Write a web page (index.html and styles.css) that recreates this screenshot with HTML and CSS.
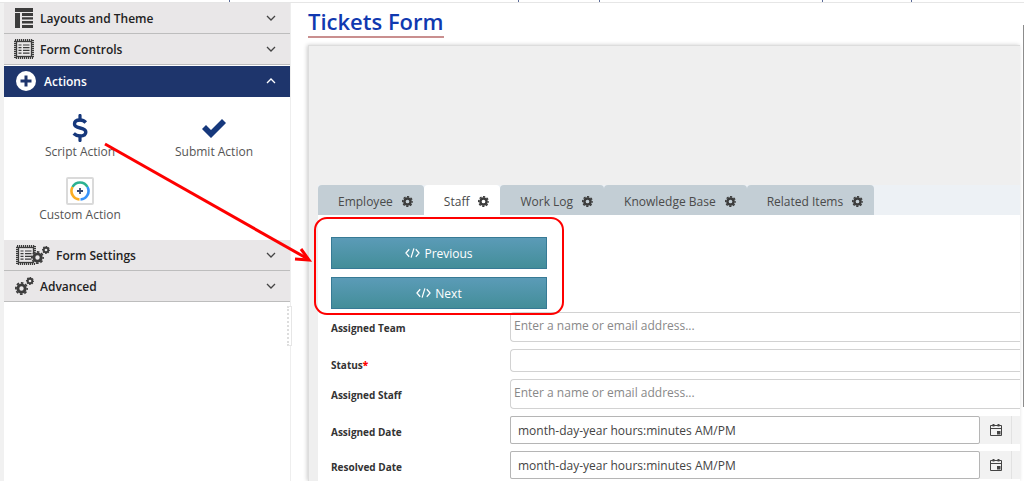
FILE: index.html
```html
<!DOCTYPE html>
<html lang="en">
<head>
    <meta charset="UTF-8">
    <meta name="viewport" content="width=device-width, initial-scale=1.0">
    <title>Tickets Form</title>
    <link rel="stylesheet" href="styles.css">
</head>
<body>

<!-- Shared icons -->
<svg class="icon-defs" aria-hidden="true">
    <symbol id="gear" viewBox="0 0 16 16">
        <circle cx="8" cy="8" r="4.5" fill="none" stroke="currentColor" stroke-width="3.6"/>
        <circle cx="8" cy="8" r="6.9" fill="none" stroke="currentColor" stroke-width="2.2" stroke-dasharray="3.2 2.22" stroke-dashoffset="1.6"/>
    </symbol>
    <symbol id="chevron" viewBox="0 0 10 6">
        <path d="M1 1l4 4 4-4" fill="none" stroke="currentColor" stroke-width="1.3"/>
    </symbol>
    <symbol id="form" viewBox="0 0 20 20">
        <rect x="1" y="1" width="18" height="18" fill="none" stroke="currentColor" stroke-width="2" stroke-dasharray="1.2 0.8"/>
        <rect x="2.5" y="2.5" width="15" height="15" fill="none" stroke="currentColor" stroke-width="1.3"/>
        <path d="M4.5 6h3M9 6h6.5M4.5 8.7h3M9 8.7h6.5M4.5 11.4h3M9 11.4h6.5M4.5 14.1h3M9 14.1h6.5" stroke="currentColor" stroke-width="1.2"/>
    </symbol>
    <symbol id="code" viewBox="0 0 16 12">
        <path d="M4.5 2L1 6l3.5 4M11.5 2L15 6l-3.5 4M9.5 1l-3 10" fill="none" stroke="currentColor" stroke-width="1.3"/>
    </symbol>
    <symbol id="calendar" viewBox="0 0 14 14">
        <path d="M1.5 2.5h11v10h-11zM1.5 5.5h11" fill="none" stroke="currentColor"/>
        <path d="M3.500 1h2v2.500h-2zM8.500 1h2v2.500h-2zM8 8h3.500v3.500H8z" fill="currentColor"/>
    </symbol>
</svg>

<div class="topline">
    <i></i><i></i><i></i><i></i><i></i>
</div>

<div class="designer">
    <nav class="sidebar">
        <button class="section">
            <svg class="section-icon" viewBox="-1 0 20 20" width="20" height="20">
                <path d="M0 0h18v4H0zM0 5h5v15H0zM7 5h11v3H7zM7 9.2h11v2.4H7zM7 13h11v2.4H7zM7 17h11v3H7z" fill="currentColor"/>
            </svg>
            <span>Layouts and Theme</span>
            <svg class="chevron"><use href="#chevron"/></svg>
        </button>
        <button class="section">
            <svg class="section-icon" width="20" height="20"><use href="#form"/></svg>
            <span>Form Controls</span>
            <svg class="chevron"><use href="#chevron"/></svg>
        </button>
        <button class="section wide active">
            <svg class="section-icon" viewBox="0 0 20 20" width="20" height="20">
                <circle cx="10" cy="10" r="10" fill="#fff"/>
                <path d="M10 4.5v11M4.5 10h11" stroke="#1e356c" stroke-width="3"/>
            </svg>
            <span>Actions</span>
            <svg class="chevron"><use href="#chevron"/></svg>
        </button>
        <div class="tools">
            <button class="tool">
                <svg viewBox="0 0 16 28" width="16" height="28" fill="none" stroke="currentColor">
                    <path d="M13.8 8.5C12 6.5 10 6 8 6 5 6 2.5 7 2.5 10c0 5.500 11.300 2.500 11.300 8 0 3-2.800 4-5.800 4-2.500 0-4.500-.8-6.300-2.500" stroke-width="3.4"/>
                    <path d="M8 1.500v4.500M8 22v4.500" stroke-width="3.200" stroke-linecap="round"/>
                </svg>
                Script Action
            </button>
            <button class="tool">
                <svg viewBox="0 0 24 28" width="24" height="28">
                    <path d="M0 15l4-4 5 5L20 5l4 4L9 24z" fill="currentColor"/>
                </svg>
                Submit Action
            </button>
            <button class="tool">
                <svg viewBox="0 0 28 28" width="28" height="28" fill="none">
                    <rect x="1" y="1" width="26" height="26" rx="1" stroke="#dadada" stroke-width="2"/>
                    <g stroke-width="2.6">
                        <path d="M6.5 10A8.5 8.5 0 0 1 21.5 10" stroke="#2cb191"/>
                        <path d="M21.5 10A8.5 8.5 0 0 1 14.5 22.5" stroke="#3793fa"/>
                        <path d="M13.5 22.5A8.500 8.500 0 0 1 6.500 10" stroke="#fcae22"/>
                    </g>
                    <path d="M14 11v6M11 14h6" stroke="#34466e" stroke-width="1.8"/>
                </svg>
                Custom Action
            </button>
        </div>
        <button class="section wide">
            <svg class="section-icon" width="34" height="20">
                <use href="#form" width="20" height="20"/>
                <circle cx="22" cy="13" r="6" fill="#e9e7e8"/>
                <use href="#gear" x="15" y="6" width="13" height="13"/>
                <use href="#gear" x="26" y="1" width="8" height="8"/>
            </svg>
            <span>Form Settings</span>
            <svg class="chevron"><use href="#chevron"/></svg>
        </button>
        <button class="section">
            <svg class="section-icon" width="20" height="20">
                <use href="#gear" x="1" y="6" width="13" height="13"/>
                <use href="#gear" x="12" y="1" width="8" height="8"/>
            </svg>
            <span>Advanced</span>
            <svg class="chevron"><use href="#chevron"/></svg>
        </button>
        <div class="splitter"></div>
    </nav>

    <main class="main">
        <h1>Tickets Form</h1>
        <div class="canvas">
            <div class="tabs">
                <button class="tab">Employee <svg><use href="#gear"/></svg></button>
                <button class="tab selected">Staff <svg><use href="#gear"/></svg></button>
                <button class="tab">Work Log <svg><use href="#gear"/></svg></button>
                <button class="tab">Knowledge Base <svg><use href="#gear"/></svg></button>
                <button class="tab">Related Items <svg><use href="#gear"/></svg></button>
            </div>
            <div class="tab-body">
                <div class="actions">
                    <button class="action"><svg><use href="#code"/></svg>Previous</button>
                    <button class="action"><svg><use href="#code"/></svg>Next</button>
                </div>
                <div class="fields">
                    <div class="field">
                        <label for="team">Assigned Team</label>
                        <input id="team" class="people" type="text" placeholder="Enter a name or email address...">
                    </div>
                    <div class="field">
                        <label for="status">Status<b>*</b></label>
                        <input id="status" class="status" type="text">
                    </div>
                    <div class="field">
                        <label for="staff">Assigned Staff</label>
                        <input id="staff" class="people" type="text" placeholder="Enter a name or email address...">
                    </div>
                    <div class="field">
                        <label for="assigned">Assigned Date</label>
                        <div class="picker">
                            <input id="assigned" type="text" value="month-day-year hours:minutes AM/PM">
                            <button aria-label="Pick a date"><svg><use href="#calendar"/></svg></button>
                        </div>
                    </div>
                    <div class="field">
                        <label for="resolved">Resolved Date</label>
                        <div class="picker">
                            <input id="resolved" type="text" value="month-day-year hours:minutes AM/PM">
                            <button aria-label="Pick a date"><svg><use href="#calendar"/></svg></button>
                        </div>
                    </div>
                </div>
            </div>
        </div>
    </main>
    <div class="scrollbar"></div>
</div>

<!-- Callout: script action to the buttons it makes -->
<svg class="callout" width="570" height="320" fill="none" stroke="#fe0000" aria-hidden="true">
    <path d="M105 144L308 259" stroke-width="3"/>
    <path d="M301 249l8 11-14-1" stroke-width="3"/>
    <rect x="315" y="218" width="248" height="96" rx="12" stroke-width="2"/>
</svg>

</body>
</html>
```
FILE: styles.css
```css
* {
    box-sizing: border-box;
}
body {
    margin: 0;
    min-height: 100vh;
    display: flex;
    flex-direction: column;
    background-color: #fff;
    font-family: "Open Sans", "Noto Sans", sans-serif;
    font-size: 12px;
    color: #444;
}
button, input {
    font: inherit;
    color: inherit;
}
button {
    border: none;
    background: none;
    padding: 0;
}
.icon-defs {
    position: absolute;
    width: 0;
    height: 0;
}
.topline {
    display: grid;
    grid-template-columns: 230fr 289fr 81fr 223fr 89fr 112fr;
    height: 3px;
    flex: none;
    border-bottom: 1px solid #e6e6e6;
}
.topline i {
    border-right: 1px solid #5a6a98;
}
.designer {
    flex: 1;
    display: flex;
}

/* Sidebar */
.sidebar {
    width: 291px;
    flex: none;
    border-left: 4px solid #f1f1f1;
    border-right: 1px solid #eee;
    position: relative;
}
.section {
    display: flex;
    align-items: center;
    gap: 6px;
    width: 100%;
    height: 31px;
    padding: 0 14px 0 10px;
    background-color: #e9e7e8;
    border-bottom: 1px solid #bdbdbd;
    font-weight: 600;
    color: #222;
}
.section.wide {
    padding-left: 12px;
}
.section-icon {
    flex: none;
    color: #3c3c3c;
}
.chevron {
    width: 10px;
    height: 6px;
    margin-left: auto;
    color: #444;
}
.section.active {
    gap: 8px;
    margin-top: 1px;
    background-color: #1e356c;
    border-color: #1e356c;
    color: #fff;
}
.active .chevron {
    color: #fff;
    transform: rotate(180deg);
}
.tools {
    display: grid;
    grid-template-columns: 1fr 1fr;
    row-gap: 16px;
    padding: 17px 9px;
    height: 143px;
}
.tool {
    display: flex;
    flex-direction: column;
    align-items: center;
    line-height: 19px;
    color: #555;
}
.tool > svg {
    color: #16387c;
}
.splitter {
    position: absolute;
    right: -2px;
    top: 303px;
    width: 5px;
    height: 40px;
    background-color: #fff;
    border: 1px solid #e6e6e6;
    border-left: 2px dotted #ddd;
}

/* Form canvas */
.main {
    flex: 1;
    min-width: 0;
    display: flex;
    flex-direction: column;
    padding-left: 17px;
}
h1 {
    align-self: flex-start;
    margin: 3px 0 7px;
    border-bottom: 2px solid #c98f8f;
    font-size: 22px;
    line-height: 30px;
    font-weight: 600;
    color: #1039b0;
}
.canvas {
    flex: 1;
    display: flex;
    flex-direction: column;
    padding: 139px 0 0 9px;
    background-color: #efefef;
    border: 1px solid #ddd;
    border-width: 1px 0 0 1px;
    box-shadow: -1px 0 4px #ccc;
}
.tabs {
    display: flex;
    background-color: #edf1f5;
}
.tab {
    display: flex;
    align-items: center;
    gap: 9px;
    height: 30px;
    padding: 2px 11px 0 20px;
    background-color: #c3ced5;
    border-radius: 4px 4px 0 0;
    color: #4a4a4a;
}
.tab.selected {
    background-color: #fff;
}
.tab svg {
    width: 11px;
    height: 11px;
    color: #3c3c3c;
}
.tab-body {
    flex: 1;
    padding: 22px 0 0 13px;
    background-color: #fff;
}
.actions {
    display: flex;
    flex-direction: column;
    gap: 8px;
    width: 216px;
    margin-bottom: 3px;
}
.action {
    display: flex;
    align-items: center;
    justify-content: center;
    gap: 4px;
    height: 32px;
    background-image: linear-gradient(#5b9bb7, #438e99);
    border: 1px solid #377a95;
    color: #fff;
}
.action svg {
    width: 15px;
    height: 12px;
}
.fields {
    display: flex;
    flex-direction: column;
    gap: 7px;
}
.field {
    display: flex;
    align-items: flex-start;
}
.field label {
    width: 179px;
    flex: none;
    padding-top: 9px;
    font-size: 10px;
    line-height: 14px;
    font-weight: 700;
    color: #333;
}
.field label b {
    color: #f00;
}
.field input {
    flex: 1;
    min-width: 0;
    border: 1px solid #d2d2d2;
    border-right: none;
    border-radius: 4px 0 0 4px;
    background-color: #fff;
}
.field ::placeholder {
    color: #888;
    opacity: 1;
}
.people {
    height: 30px;
    padding: 0 3px 4px;
}
.status {
    height: 23px;
}
.picker {
    flex: 1;
    display: flex;
    height: 28px;
    background-color: #f2f2f2;
}
.field .picker input {
    padding: 0 7px;
    border: 1px solid #b5b5b5;
    border-radius: 2px;
}
.picker button {
    display: flex;
    align-items: center;
    justify-content: center;
    width: 32px;
    margin-right: 8px;
    border-right: 1px solid #e2e2e2;
}
.picker svg {
    width: 14px;
    height: 14px;
}
.scrollbar {
    width: 4px;
    flex: none;
    height: 382px;
    margin-top: 22px;
    border-right: 1px solid #8c8c8c;
}

.callout {
    position: absolute;
    left: 0;
    top: 0;
    pointer-events: none;
}
```
